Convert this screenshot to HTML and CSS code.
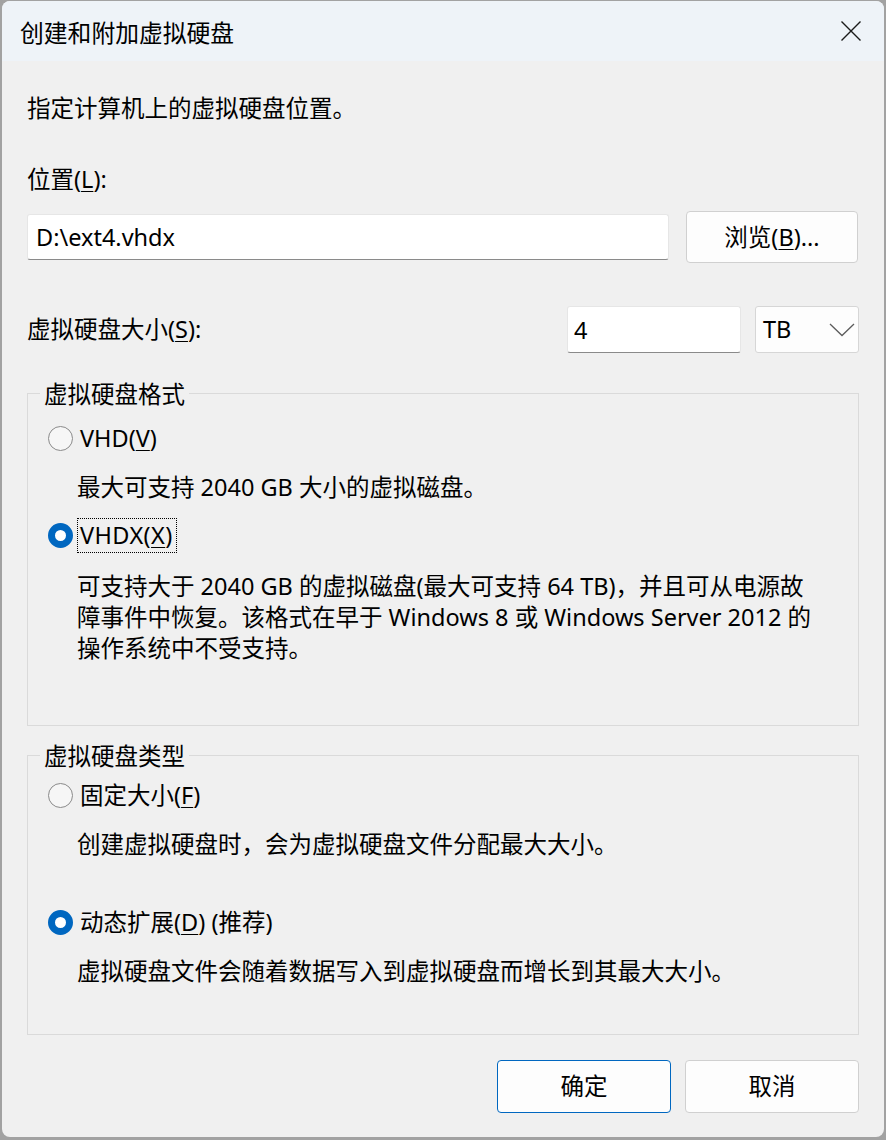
FILE: index.html
```html
<!DOCTYPE html>
<html lang="zh-CN">
  <head>
    <meta charset="UTF-8" />
    <meta name="viewport" content="width=device-width, initial-scale=1.0" />
    <link rel="stylesheet" href="styles.css">
    <title>创建和附加虚拟硬盘</title>
  </head>
  <body class="desk">
    <div class="dialog">
      <header class="dialog__titlebar">
        <span class="dialog__title">创建和附加虚拟硬盘</span>
        <button type="button" class="dialog__close" aria-label="关闭">
          <svg width="20" height="20" viewBox="0 0 20 20">
            <path d="M0.5 0.5 L19.5 19.5 M19.5 0.5 L0.5 19.5" stroke="#1a1a1a" stroke-width="1.4" fill="none" />
          </svg>
        </button>
      </header>

      <main class="dialog__body">
        <p class="intro">指定计算机上的虚拟硬盘位置。</p>

        <label class="field-label" for="vhd-path">位置(<u>L</u>):</label>
        <div class="path-row">
          <input id="vhd-path" class="textbox path-row__input" type="text" value="D:\ext4.vhdx" />
          <button type="button" class="btn path-row__browse">浏览(<u>B</u>)...</button>
        </div>

        <div class="size-row">
          <label class="size-row__label" for="vhd-size">虚拟硬盘大小(<u>S</u>):</label>
          <input id="vhd-size" class="textbox size-row__input" type="text" value="4" />
          <div class="combo">
            <span>TB</span>
            <svg width="26" height="14" viewBox="0 0 26 14">
              <polyline points="1,1 13,12.5 25,1" stroke="#5c5c5c" stroke-width="1.3" fill="none" />
            </svg>
          </div>
        </div>

        <fieldset class="group group--format">
          <legend class="group__title">虚拟硬盘格式</legend>
          <label class="option option--first">
            <input type="radio" name="format" class="radio" />
            <span>VHD(<u>V</u>)</span>
          </label>
          <p class="option-desc">最大可支持 2040 GB 大小的虚拟磁盘。</p>
          <label class="option option--next">
            <input type="radio" name="format" class="radio" checked />
            <span class="option__focus">VHDX(<u>X</u>)</span>
          </label>
          <p class="option-desc option-desc--long">
            可支持大于 2040 GB 的虚拟磁盘(最大可支持 64 TB)，并且可从电源故<br>
            障事件中恢复。该格式在早于 Windows 8 或 Windows Server 2012 的<br>
            操作系统中不受支持。
          </p>
        </fieldset>

        <fieldset class="group group--type">
          <legend class="group__title">虚拟硬盘类型</legend>
          <label class="option option--top">
            <input type="radio" name="type" class="radio" />
            <span>固定大小(<u>F</u>)</span>
          </label>
          <p class="option-desc">创建虚拟硬盘时，会为虚拟硬盘文件分配最大大小。</p>
          <label class="option option--far">
            <input type="radio" name="type" class="radio" checked />
            <span>动态扩展(<u>D</u>) (推荐)</span>
          </label>
          <p class="option-desc">虚拟硬盘文件会随着数据写入到虚拟硬盘而增长到其最大大小。</p>
        </fieldset>

        <div class="actions">
          <button type="button" class="btn btn--default">确定</button>
          <button type="button" class="btn">取消</button>
        </div>
      </main>
    </div>
  </body>
</html>
```

FILE: styles.css
```css
.desk {
  margin: 0;
  background: #a2a2a2;
  font-family: "Noto Sans", "Noto Sans CJK SC", sans-serif;
  font-size: 23.5px;
  color: #000;
}
.dialog {
  margin: 1px 0 0 2px;
  width: 882px;
  height: 1136px;
  border-radius: 8px;
  background: #f0f0f0;
  overflow: hidden;
  display: flex;
  flex-direction: column;
}
.dialog__titlebar {
  height: 60px;
  flex: none;
  display: flex;
  align-items: center;
  padding-left: 18px;
  background: #eef3f8;
}
.dialog__title {
  font-family: "Noto Sans CJK SC", sans-serif;
  font-size: 23.8px;
  line-height: 31px;
}
.dialog__close {
  margin-left: auto;
  margin-right: 23px;
  padding: 0;
  border: none;
  background: none;
  width: 20px;
  height: 20px;
  display: flex;
}
.dialog__body {
  padding: 32px 25px 0 25px;
  display: flex;
  flex-direction: column;
  line-height: 31px;
}
.intro {
  margin: 0;
}
.field-label {
  margin-top: 40px;
}
u {
  text-underline-offset: 3px;
  text-decoration-thickness: 1px;
}

/* text boxes and buttons */
.textbox {
  box-sizing: border-box;
  font: inherit;
  color: #000;
  background: #fff;
  border: 1px solid #e6e6e6;
  border-bottom: 1.5px solid #8a8a8a;
  border-radius: 3px;
  outline: none;
  margin: 0;
}
.btn {
  box-sizing: border-box;
  font: inherit;
  color: #000;
  background: #fdfdfd;
  border: 1px solid #d0d0d0;
  border-radius: 4px;
  padding: 0;
  margin: 0;
}
.btn--default {
  border-color: #0067c0;
}

.path-row {
  margin-top: 16px;
  display: flex;
  align-items: center;
  gap: 17px;
}
.path-row__input {
  flex: 1;
  height: 46px;
  padding: 0 8px;
}
.path-row__browse {
  width: 172px;
  height: 52px;
  margin-right: 1px;
}

.size-row {
  margin-top: 43px;
  display: flex;
  align-items: center;
  gap: 14px;
}
.size-row__label {
  flex: 1;
}
.size-row__input {
  width: 174px;
  height: 47px;
  padding: 0 6px;
}
.combo {
  box-sizing: border-box;
  width: 104px;
  height: 47px;
  display: flex;
  align-items: center;
  justify-content: space-between;
  padding: 0 3px 0 7px;
  background: #fdfdfd;
  border: 1px solid #d6d6d6;
  border-radius: 3px;
}

/* group boxes */
.group {
  margin: 25px 0 0 0;
  padding: 0 0 0 49px;
  border: 1px solid #dadada;
  min-inline-size: auto;
}
.group + .group {
  margin-top: 14px;
}
.group--format {
  padding-bottom: 61px;
}
.group--type {
  padding-bottom: 47px;
}
.group__title {
  margin-left: -37px;
  padding: 0 4px;
  line-height: 31px;
  font-family: "Noto Sans CJK SC", sans-serif;
}
.option {
  display: flex;
  align-items: center;
  margin-left: -29px;
  height: 31px;
}
.option--first {
  margin-top: 14px;
}
.option--top {
  margin-top: 9px;
}
.option--next {
  margin-top: 17px;
}
.option--far {
  margin-top: 47px;
}
.option-desc {
  margin: 18px 0 0 0;
}
.option-desc--long {
  margin-top: 20px;
}
.option__focus {
  margin-left: -2px;
  padding: 1px 3px 1px 2px;
  outline: 1px dotted #000;
  outline-offset: 0;
  letter-spacing: 0.4px;
}
.radio {
  appearance: none;
  box-sizing: border-box;
  width: 25px;
  height: 25px;
  margin: 0 7px 0 0;
  border: 1.4px solid #8a8a8a;
  border-radius: 50%;
  background: #f6f6f6;
}
.radio:checked {
  border: 7.5px solid #0067c0;
  background: #fff;
}

.actions {
  margin-top: 25px;
  display: flex;
  justify-content: flex-end;
  gap: 14px;
}
.actions .btn {
  width: 174px;
  height: 53px;
}
```
